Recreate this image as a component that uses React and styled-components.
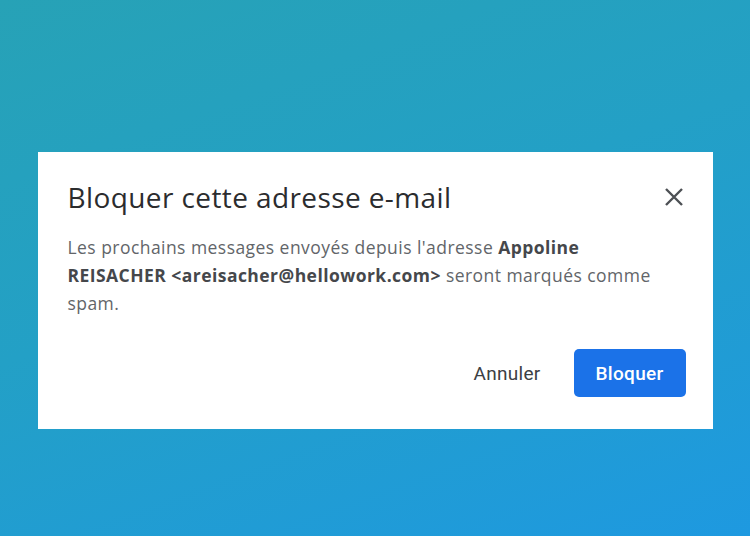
import React from "react";
import styled, { createGlobalStyle } from "styled-components";

const GlobalStyle = createGlobalStyle`
  html, body {
    margin: 0;
    padding: 0;
  }
  body {
    font-family: "Open Sans", Roboto, "Liberation Sans", Arial, sans-serif;
  }
`;

const Backdrop = styled.div`
  width: 750px;
  height: 536px;
  box-sizing: border-box;
  padding-top: 152px;
  display: flex;
  justify-content: center;
  align-items: flex-start;
  background: linear-gradient(160deg, #27a2b6 0%, #23a0c6 45%, #1e99e0 100%);
`;

const Dialog = styled.div`
  width: 675px;
  height: 277px;
  box-sizing: border-box;
  background: #ffffff;
  padding: 26px 27px 32px 30px;
  display: flex;
  flex-direction: column;
`;

const Header = styled.div`
  display: flex;
  align-items: center;
  justify-content: space-between;
`;

const Title = styled.h2`
  margin: 0;
  font-family: "Open Sans", Roboto, sans-serif;
  font-weight: 400;
  font-size: 28px;
  line-height: 38px;
  letter-spacing: 0.4px;
  color: #2b2c2e;
`;

const CloseButton = styled.button`
  width: 24px;
  height: 24px;
  padding: 0;
  border: none;
  background: transparent;
  display: flex;
  align-items: center;
  justify-content: center;
  cursor: pointer;
`;

const Message = styled.p`
  margin: 17px 0 0 0;
  width: 615px;
  font-size: 17.5px;
  line-height: 28px;
  letter-spacing: 0.45px;
  color: #626569;

  strong {
    font-weight: 700;
    color: #45474b;
  }
`;

const Actions = styled.div`
  margin-top: auto;
  display: flex;
  justify-content: flex-end;
  align-items: center;
  gap: 17px;
`;

const ActionButton = styled.button`
  height: 48px;
  border: none;
  border-radius: 5px;
  padding: 0 ${p => (p.primary ? "22px" : "16px")};
  font-family: Roboto, "Open Sans", sans-serif;
  font-size: 19px;
  letter-spacing: 0.3px;
  font-weight: ${p => (p.primary ? 500 : 400)};
  background: ${p => (p.primary ? "#1b72e8" : "transparent")};
  color: ${p => (p.primary ? "#ffffff" : "#3c4043")};
  cursor: pointer;
`;

function CloseIcon() {
  return (
    <svg width="20" height="20" viewBox="0 0 20 20">
      <path d="M2 2 L18 18 M18 2 L2 18" stroke="#4d5054" strokeWidth="2.4" strokeLinecap="butt" />
    </svg>
  );
}

export default function App() {
  return (
    <Backdrop>
      <GlobalStyle />
      <Dialog>
        <Header>
          <Title>Bloquer cette adresse e-mail</Title>
          <CloseButton aria-label="Fermer">
            <CloseIcon />
          </CloseButton>
        </Header>
        <Message>
          Les prochains messages envoyés depuis l'adresse <strong>Appoline REISACHER &lt;areisacher@hellowork.com&gt;</strong> seront marqués comme spam.
        </Message>
        <Actions>
          <ActionButton>Annuler</ActionButton>
          <ActionButton primary>Bloquer</ActionButton>
        </Actions>
      </Dialog>
    </Backdrop>
  );
}
